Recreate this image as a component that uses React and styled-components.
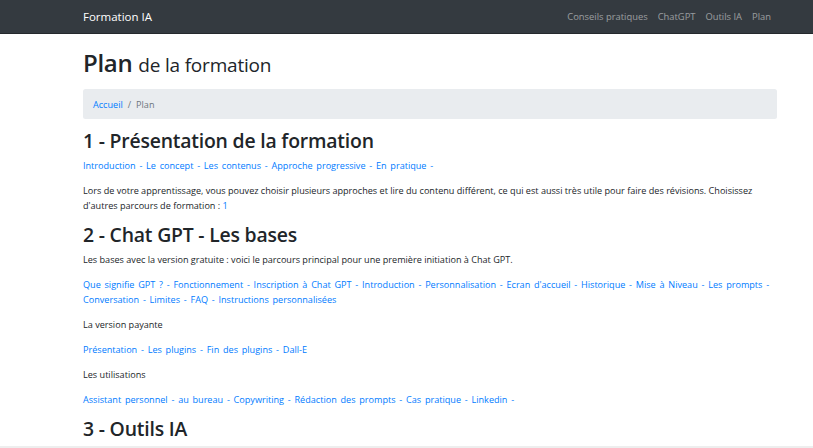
import React from "react";
import styled, { createGlobalStyle } from "styled-components";

const GlobalStyle = createGlobalStyle`
  html, body {
    margin: 0;
    padding: 0;
    background: #fff;
  }
  body {
    font-family: "Open Sans", "Noto Sans", sans-serif;
    font-size: 9.1px;
    line-height: 15px;
    color: #212529;
  }
  * { box-sizing: border-box; }
`;

const Navbar = styled.nav`
  height: 34px;
  background: #343a40;
  border-bottom: 1px solid #25292d;
`;

const Container = styled.div`
  width: 694px;
  margin-left: 83px;
  height: 100%;
`;

const NavInner = styled(Container)`
  display: flex;
  align-items: center;
  justify-content: space-between;
`;

const Brand = styled.a`
  color: #fff;
  font-size: 11.5px;
  text-decoration: none;
`;

const NavLinks = styled.div`
  display: flex;
`;

const NavLink = styled.a`
  color: rgba(255, 255, 255, 0.5);
  font-size: 9.4px;
  padding: 0 5px;
  text-decoration: none;
  &:last-child { padding-right: 6px; }
`;

const Main = styled(Container)`
  padding-top: 13px;
`;

const Title = styled.h1`
  margin: 0 0 8px;
  font-size: 24px;
  font-weight: 600;
  line-height: 32px;
  letter-spacing: -0.3px;
`;

const TitleSmall = styled.span`
  font-size: 19px;
  font-weight: 400;
  letter-spacing: -0.2px;
`;

const Breadcrumb = styled.ol`
  display: flex;
  margin: 0 0 10px;
  padding: 7.5px 10px;
  list-style: none;
  background: #e9ecef;
  border-radius: 2.5px;
  li + li::before {
    content: "/";
    color: #6c757d;
    padding: 0 5px;
  }
`;

const Crumb = styled.li`
  color: ${(p) => (p.$active ? "#6c757d" : "#007bff")};
`;

const SectionTitle = styled.h2`
  margin: 0 0 5px;
  font-size: 19.4px;
  font-weight: 600;
  line-height: 24px;
  letter-spacing: -0.2px;
`;

const Para = styled.p`
  margin: 0 0 10px;
`;

const LinkLine = styled.p`
  margin: 0 0 10px;
  color: #007bff;
  word-spacing: 1.4px;
`;

const Link = styled.a`
  color: #007bff;
  text-decoration: none;
`;

const BottomStrip = styled.div`
  height: 4px;
  margin-top: 5px;
  background: #eeeeee;
  width: 100%;
`;

const Links = ({ items, trailing }) => (
  <LinkLine>
    {items.map((label, i) => (
      <React.Fragment key={label}>
        <Link href="#">{label}</Link>
        {(i < items.length - 1 || trailing) && " - "}
      </React.Fragment>
    ))}
  </LinkLine>
);

export default function App() {
  return (
    <>
      <GlobalStyle />
      <Navbar>
        <NavInner>
          <Brand href="#">Formation IA</Brand>
          <NavLinks>
            <NavLink href="#">Conseils pratiques</NavLink>
            <NavLink href="#">ChatGPT</NavLink>
            <NavLink href="#">Outils IA</NavLink>
            <NavLink href="#">Plan</NavLink>
          </NavLinks>
        </NavInner>
      </Navbar>
      <Main>
        <Title>
          Plan <TitleSmall>de la formation</TitleSmall>
        </Title>
        <Breadcrumb>
          <Crumb>Accueil</Crumb>
          <Crumb $active>Plan</Crumb>
        </Breadcrumb>

        <SectionTitle>1 - Présentation de la formation</SectionTitle>
        <Links
          trailing
          items={["Introduction", "Le concept", "Les contenus", "Approche progressive", "En pratique"]}
        />
        <Para>
          Lors de votre apprentissage, vous pouvez choisir plusieurs approches et lire du contenu
          différent, ce qui est aussi très utile pour faire des révisions. Choisissez d'autres
          parcours de formation : <Link href="#">1</Link>
        </Para>

        <SectionTitle>2 - Chat GPT - Les bases</SectionTitle>
        <Para>
          Les bases avec la version gratuite : voici le parcours principal pour une première
          initiation à Chat GPT.
        </Para>
        <Links
          items={[
            "Que signifie GPT ?",
            "Fonctionnement",
            "Inscription à Chat GPT",
            "Introduction",
            "Personnalisation",
            "Ecran d'accueil",
            "Historique",
            "Mise à Niveau",
            "Les prompts",
            "Conversation",
            "Limites",
            "FAQ",
            "Instructions personnalisées",
          ]}
        />
        <Para>La version payante</Para>
        <Links items={["Présentation", "Les plugins", "Fin des plugins", "Dall-E"]} />
        <Para>Les utilisations</Para>
        <Links
          trailing
          items={[
            "Assistant personnel",
            "au bureau",
            "Copywriting",
            "Rédaction des prompts",
            "Cas pratique",
            "Linkedin",
          ]}
        />
        <SectionTitle>3 - Outils IA</SectionTitle>
      </Main>
      <BottomStrip />
    </>
  );
}
